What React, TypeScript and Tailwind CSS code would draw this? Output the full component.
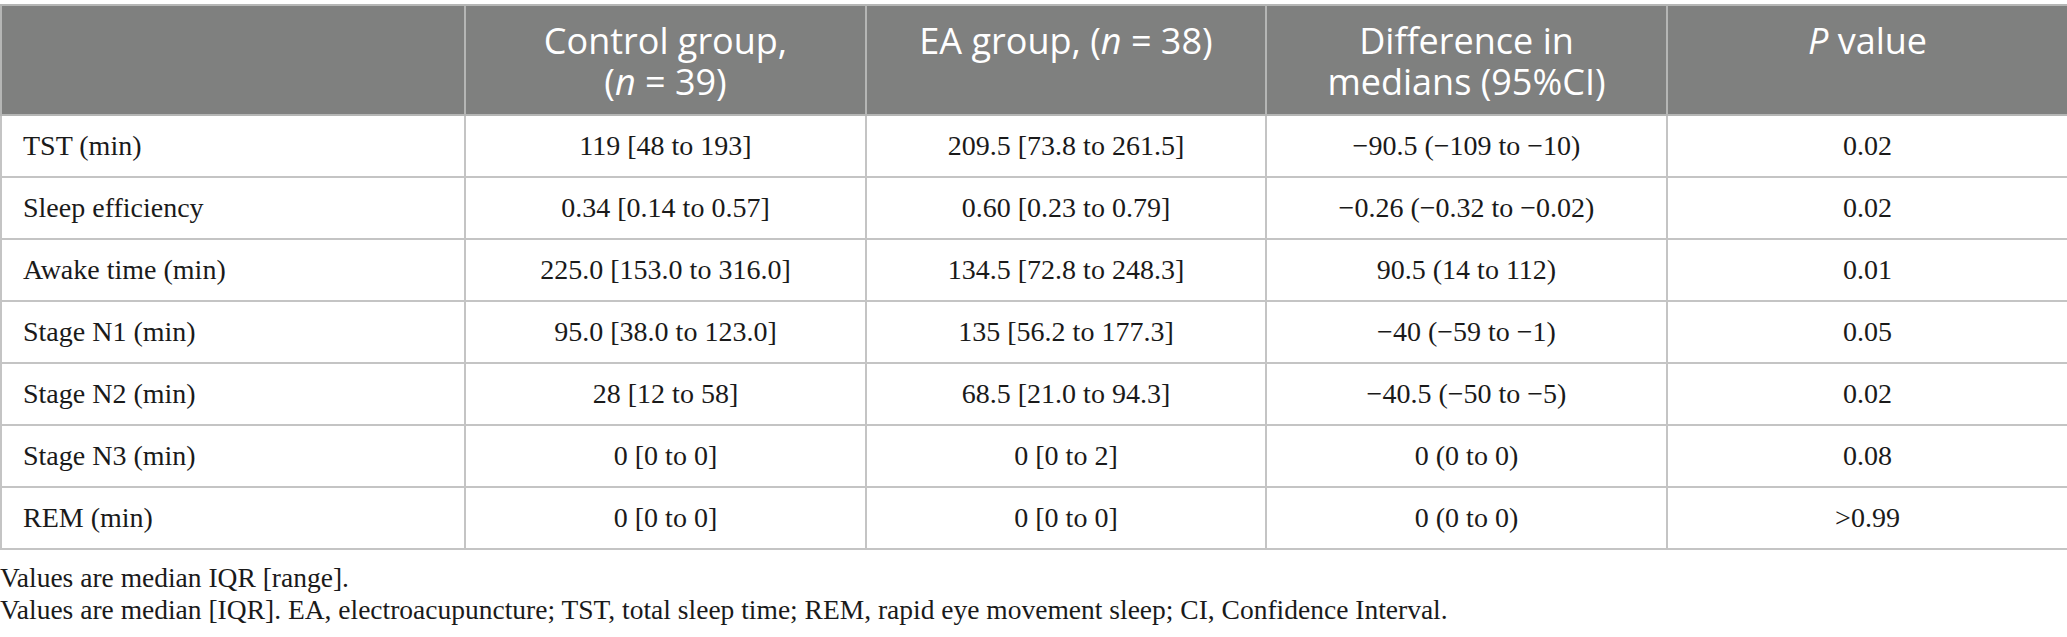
import React from "react";

const rows: [string, string, string, string, string][] = [
  ["TST (min)", "119 [48 to 193]", "209.5 [73.8 to 261.5]", "\u221290.5 (\u2212109 to \u221210)", "0.02"],
  ["Sleep efficiency", "0.34 [0.14 to 0.57]", "0.60 [0.23 to 0.79]", "\u22120.26 (\u22120.32 to \u22120.02)", "0.02"],
  ["Awake time (min)", "225.0 [153.0 to 316.0]", "134.5 [72.8 to 248.3]", "90.5 (14 to 112)", "0.01"],
  ["Stage N1 (min)", "95.0 [38.0 to 123.0]", "135 [56.2 to 177.3]", "\u221240 (\u221259 to \u22121)", "0.05"],
  ["Stage N2 (min)", "28 [12 to 58]", "68.5 [21.0 to 94.3]", "\u221240.5 (\u221250 to \u22125)", "0.02"],
  ["Stage N3 (min)", "0 [0 to 0]", "0 [0 to 2]", "0 (0 to 0)", "0.08"],
  ["REM (min)", "0 [0 to 0]", "0 [0 to 0]", "0 (0 to 0)", ">0.99"],
];

const serif = "font-['Liberation_Serif','Times_New_Roman',serif]";
const sans = "font-['Open_Sans','Noto_Sans',sans-serif]";

export default function App() {
  return (
    <div className="w-[2067px] bg-white pt-[4px]">
      <table className="w-[2067px] table-fixed border-collapse">
        <colgroup>
          <col className="w-[464px]" />
          <col className="w-[401px]" />
          <col className="w-[400px]" />
          <col className="w-[401px]" />
          <col className="w-[401px]" />
        </colgroup>
        <thead>
          <tr className={`h-[110px] bg-[#7f807f] text-white ${sans} text-[36px] leading-[41px]`}>
            <th className="border-2 border-[#b5b6b5] align-top pt-[14px] font-normal"></th>
            <th className="border-2 border-[#b5b6b5] align-top pt-[14px] font-normal text-center">
              Control group,
              <br />(<i>n</i> = 39)
            </th>
            <th className="border-2 border-[#b5b6b5] align-top pt-[14px] font-normal text-center">
              EA group, (<i>n</i> = 38)
            </th>
            <th className="border-2 border-[#b5b6b5] align-top pt-[14px] font-normal text-center">
              Difference in
              <br />
              medians (95%CI)
            </th>
            <th className="border-2 border-[#b5b6b5] align-top pt-[14px] font-normal text-center">
              <i>P</i> value
            </th>
          </tr>
        </thead>
        <tbody className={`${serif} text-[28px] text-[#1a1a1a]`}>
          {rows.map((r, i) => (
            <tr key={i} className="h-[62px]">
              <td className="border-2 border-[#c4c4c4] pl-[21px] text-left align-middle">{r[0]}</td>
              <td className="border-2 border-[#c4c4c4] text-center align-middle">{r[1]}</td>
              <td className="border-2 border-[#c4c4c4] text-center align-middle">{r[2]}</td>
              <td className="border-2 border-[#c4c4c4] text-center align-middle">{r[3]}</td>
              <td className="border-2 border-[#c4c4c4] text-center align-middle">{r[4]}</td>
            </tr>
          ))}
        </tbody>
      </table>
      <div className={`${serif} text-[27.5px] leading-[32px] text-[#1a1a1a] pt-[12px]`}>
        <p>Values are median IQR [range].</p>
        <p>
          Values are median [IQR]. EA, electroacupuncture; TST, total sleep time; REM, rapid eye movement sleep; CI,
          Confidence Interval.
        </p>
      </div>
    </div>
  );
}
